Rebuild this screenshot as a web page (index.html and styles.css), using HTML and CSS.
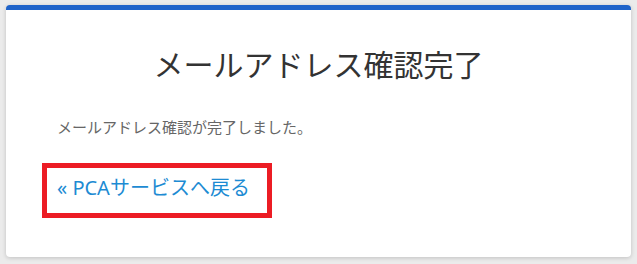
FILE: index.html
```html
<!DOCTYPE html>
<html lang="ja">
<head>
<meta charset="utf-8">
<title>メールアドレス確認完了</title>
<link rel="stylesheet" href="styles.css">
</head>
<body>
<main class="card">
  <h1 class="card-title">メールアドレス確認完了</h1>
  <p class="card-text">メールアドレス確認が完了しました。</p>
  <div class="card-actions">
    <a class="back-link" href="#">« PCAサービスへ戻る</a>
  </div>
</main>
</body>
</html>
```

FILE: styles.css
```css
html, body {
  margin: 0;
  padding: 0;
}
body {
  background: #ebebeb;
  padding: 5px 6px 7px 6px;
  font-family: "Noto Sans", "Noto Sans CJK JP", sans-serif;
}
.card {
  background: #fff;
  border-top: 5px solid #1f63c9;
  border-radius: 4px;
  box-shadow: 0 1px 4px rgba(0, 0, 0, 0.18);
  padding: 31px 36px 39px 36px;
}
.card-title {
  margin: 0;
  font-size: 30px;
  line-height: 45px;
  font-weight: 400;
  color: #333;
  text-align: center;
  font-family: "Noto Sans CJK JP", sans-serif;
}
.card-text {
  margin: 30px 0 0 15px;
  font-size: 15px;
  line-height: 22.5px;
  color: #666;
}
.card-actions {
  margin-top: 24px;
}
.back-link {
  display: block;
  box-sizing: border-box;
  width: 230px;
  height: 55px;
  border: 5px solid #ec1c24;
  padding: 5px 0 0 10px;
  font-size: 20px;
  line-height: 30px;
  color: #1d8bd3;
  text-decoration: none;
}
```
